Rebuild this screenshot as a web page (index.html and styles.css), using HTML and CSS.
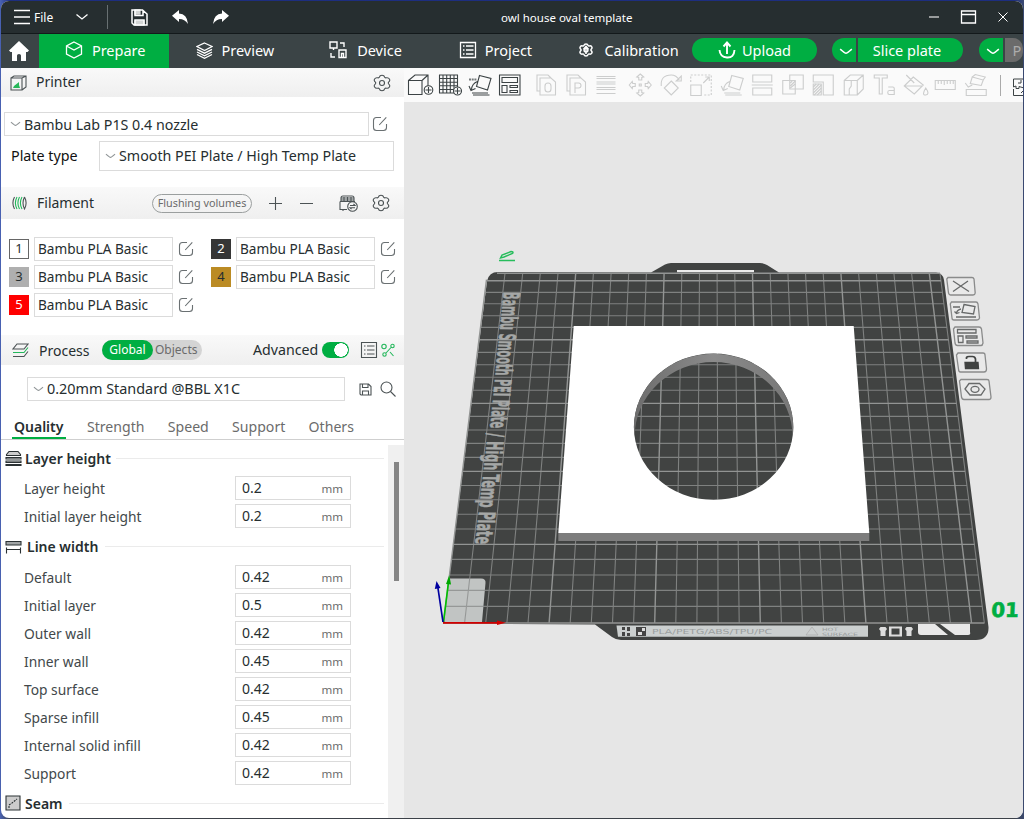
FILE: index.html
```html
<!DOCTYPE html>
<html lang="en">
<head>
<meta charset="utf-8">
<title>owl house oval template</title>
<link rel="stylesheet" href="styles.css">
</head>
<body>
<svg class="defs" width="0" height="0">
  <symbol id="edit" viewBox="0 0 16 16"><path d="M9 1.500H4.500Q1.500 1.500 1.500 4.500V11.500Q1.500 14.500 4.500 14.500H11.500Q14.500 14.500 14.500 11.500V8M7.200 9L14.300 1.300"/></symbol>
  <symbol id="chev" viewBox="0 0 12 6"><path d="M1 1Q5 4.500 6 4.500T11 1"/></symbol>
  <symbol id="gear" viewBox="0 0 18 18"><path d="M6.200 3.400Q6.800 1.300 9 1.300T11.800 3.400Q12.300 4 13.300 3.800Q15.400 3.300 16.400 5T15.600 8.200Q15 9 15.600 9.800Q17.400 11.300 16.400 13T13.300 14.200Q12.300 14 11.800 14.600Q11.200 16.700 9 16.700T6.200 14.600Q5.700 14 4.700 14.200Q2.600 14.700 1.600 13T2.400 9.800Q3 9 2.400 8.200Q.6 6.700 1.600 5T4.700 3.800Q5.700 4 6.200 3.400Z"/><circle cx="9" cy="9" r="2.500"/></symbol>
  <symbol id="arrange" viewBox="0 0 30 34"><path d="M14.500 7.500L26 10.500L22.500 22L11.500 18.500ZM12.500 13.500Q7 15.500 6.500 21.500M4 18L6 22.500L10.500 20.500M7 25H23M8 27H24.500"/></symbol>
  <symbol id="list" viewBox="0 0 18 18"><path d="M1.500 1.500H16.500V16.500H1.500ZM4 5H5.500M7 5H14.500M4 9H5.500M7 9H14.500M4 13H5.500M7 13H14.500"/></symbol>
</svg>
<div class="window">
  <header class="titlebar">
    <svg class="ico menu" width="16" height="16" viewBox="0 0 16 16"><path d="M0 1.500H16M0 8H16M0 14.500H16"/></svg>
    <span class="file">File</span>
    <svg class="ico drop" width="14" height="8" viewBox="0 0 14 8"><path d="M1.500 1.500L7 6L12.500 1.500"/></svg>
    <i class="bar"></i>
    <svg class="ico save" width="17" height="17" viewBox="0 0 17 17"><path d="M1 1H11.500L16 5V16H3L1 14ZM4 1V6.500H12V1M4 16V11H13V16" stroke-width="1.500"/><path class="solid" d="M4 1H9V5H4ZM4 12H13V16H4Z" opacity=".8"/></svg>
    <svg class="solid undo" width="16" height="14" viewBox="0 0 16 14"><path d="M0 5.800L7 0V3.500Q15 3.500 16 14Q12.500 8.800 7 9V12Z"/></svg>
    <svg class="solid redo" width="16" height="14" viewBox="0 0 16 14"><path d="M16 5.800L9 0V3.500Q1 3.500 0 14Q3.500 8.800 9 9V12Z"/></svg>
    <span class="doc">owl house oval template</span>
    <svg class="ico winbtns" width="80" height="14" viewBox="0 0 80 14"><path d="M1 7H11" opacity=".7"/><path d="M33.500 1H47.500V13H33.500ZM33.500 4.500H47.500"/><path d="M70.500 2.500L79.500 11.500M79.500 2.500L70.500 11.500" stroke-width="1"/></svg>
  </header>
  <nav class="nav">
    <a class="home"><svg class="solid" width="20" height="20" viewBox="0 0 20 20"><path d="M10 0L20 9.500L18.500 11H17V20H12V14.500Q12 13 10 13T8 14.500V20H3V11H1.500L0 9.500Z"/></svg></a>
    <a class="tab on"><svg class="ico" width="18" height="18" viewBox="0 0 18 18"><path d="M9 1L16.500 5V13L9 17L1.500 13V5ZM1.500 5L9 9L16.500 5"/></svg><span>Prepare</span></a>
    <a class="tab preview"><svg class="ico" width="17" height="17" viewBox="0 0 17 17"><path d="M8.500 1L16 4.500L8.500 8.500L1 4.500ZM1 7.300L8.500 11.200L16 7.300M1 10L8.500 13.800L16 10M1 12.500L8.500 16.300L16 12.500"/></svg><span>Preview</span></a>
    <a class="tab device"><svg class="ico" width="18" height="18" viewBox="0 0 18 18"><path d="M1 1H8V7H1ZM4.500 7V9M11 2H15V6M2 12V16H6M10 9H17V16.500H10ZM12.500 16V12.500H14.500V16" stroke-width="1.400"/></svg><span>Device</span></a>
    <a class="tab project"><svg class="ico" width="18" height="18"><use href="#list"/></svg><span>Project</span></a>
    <a class="tab calib"><svg class="ico" width="14" height="14" viewBox="0 0 18 18"><g stroke-width="1.900"><use href="#gear"/></g><path d="M9 4V14M6 8L9 4.500L12 8" stroke-width="2"/></svg><span>Calibration</span></a>
    <button class="pill upload"><svg class="ico" width="18" height="18" viewBox="0 0 18 18"><path d="M9 13V2M5.500 5.500L9 1.500L12.500 5.500M1.500 9Q2 16 9 16.500T16.500 9" stroke-width="1.900"/></svg><span>Upload</span></button>
    <button class="pill half left"><svg class="ico" width="14" height="7"><use href="#chev"/></svg></button>
    <button class="pill half slice"><span>Slice plate</span></button>
    <button class="pill half left print"><svg class="ico" width="14" height="7"><use href="#chev"/></svg></button>
    <button class="pill half disabled"><span>P</span></button>
  </nav>
  <div class="main">
    <aside class="side">
      <div class="head printer">
        <svg class="line" width="17" height="16" viewBox="0 0 17 16"><path d="M1 3H12V15H1ZM1 3L4 1H16V12L12 15M12 3L16 1"/><path class="g" d="M3 13L4 11L9 7V10L10 13Z"/></svg>
        <span class="name">Printer</span><svg class="line end" width="18" height="18"><use href="#gear"/></svg>
      </div>
      <div class="row machine"><div class="select"><svg class="chev" width="11" height="6"><use href="#chev"/></svg><span>Bambu Lab P1S 0.4 nozzle</span></div><svg class="line edit" width="16" height="16"><use href="#edit"/></svg></div>
      <div class="row plate"><label>Plate type</label><div class="select"><svg class="chev" width="11" height="6"><use href="#chev"/></svg><span>Smooth PEI Plate / High Temp Plate</span></div></div>
      <div class="head filament">
        <svg class="line" width="15" height="14" viewBox="0 0 15 14"><path d="M2.500 1Q-.7 7 2.500 13M12.500 1Q15.700 7 12.500 13Q9.500 7 12.500 1"/><path class="gl" d="M5 1Q1.800 7 5 13M7.500 1Q4.300 7 7.500 13M10 1Q6.800 7 10 13"/></svg>
        <span class="name">Filament</span><span class="flush">Flushing volumes</span>
        <svg class="line plus" width="13" height="13" viewBox="0 0 13 13"><path d="M0 6.500H13M6.500 0V13"/></svg>
        <svg class="line minus" width="13" height="13" viewBox="0 0 13 13"><path d="M0 6.500H13"/></svg>
        <svg class="line ams" width="19" height="17" viewBox="0 0 19 17"><path d="M2 6V3Q2 1 4 1H13Q15 1 15 3V6M1 6.500H16M1 6.500V14.500H8M5 2V6M8.500 2V6M12 2V6M4 14V16"/><path class="dark" d="M2 2H15V6H2Z" opacity=".5"/><circle cx="13.500" cy="11.500" r="4.800"/><path d="M11 10.500H16L14.500 9M16 12.800H11L12.500 14.200"/></svg>
        <svg class="line" width="18" height="18"><use href="#gear"/></svg>
      </div>
      <div class="spools">
        <div class="spool"><b class="c1">1</b><span>Bambu PLA Basic</span><svg class="line edit" width="16" height="16"><use href="#edit"/></svg></div>
        <div class="spool"><b class="c2">2</b><span>Bambu PLA Basic</span><svg class="line edit" width="16" height="16"><use href="#edit"/></svg></div>
        <div class="spool"><b class="c3">3</b><span>Bambu PLA Basic</span><svg class="line edit" width="16" height="16"><use href="#edit"/></svg></div>
        <div class="spool"><b class="c4">4</b><span>Bambu PLA Basic</span><svg class="line edit" width="16" height="16"><use href="#edit"/></svg></div>
        <div class="spool"><b class="c5">5</b><span>Bambu PLA Basic</span><svg class="line edit" width="16" height="16"><use href="#edit"/></svg></div>
      </div>
      <div class="head process">
        <svg class="line" width="17" height="15" viewBox="0 0 17 15"><path d="M5 1H16L12 6H1Z"/><path class="gl" d="M1 9.500H12L16 4.500"/><path d="M1 13.500H12L16 8.500"/></svg>
        <span class="name">Process</span>
        <div class="scope"><span class="on">Global</span><span>Objects</span></div>
        <span class="adv">Advanced</span><i class="toggle"></i>
        <svg class="line lst" width="18" height="18"><use href="#list"/></svg>
        <svg class="gl tune" width="14" height="14" viewBox="0 0 14 14"><circle cx="3" cy="3.500" r="2.200"/><circle cx="11.500" cy="3" r="1.700"/><circle cx="3.500" cy="11.500" r="1.700"/><path d="M5 10L10 4.500M9 9L12.500 13"/></svg>
      </div>
      <div class="row preset"><div class="select"><svg class="chev" width="11" height="6"><use href="#chev"/></svg><span>0.20mm Standard @BBL X1C</span></div>
        <svg class="line" width="13" height="13" viewBox="0 0 13 13"><path d="M1 1H9.500L12 3.500V12H2L1 11ZM3.500 1V4.500H9V1M3.500 12V8H9.500V12"/></svg>
        <svg class="line" width="16" height="16" viewBox="0 0 16 16"><circle cx="6.500" cy="6.500" r="5.500"/><path d="M10.500 10.500L15.500 15.500"/></svg></div>
      <div class="tabs"><span class="on">Quality</span><span>Strength</span><span>Speed</span><span>Support</span><span>Others</span></div>
      <div class="scroll">
        <div class="form">
          <h3><svg class="line" width="17" height="16" viewBox="0 0 17 16"><path class="pale" d="M1.500 4.500L4 1.500H13L15.500 4.500V5.500H1.500ZM1 7.500H16V9H1ZM1 11H16V12.500H1ZM1 14.500H16V15.500H1Z"/></svg><span>Layer height</span></h3>
          <div class="field"><label>Layer height</label><div class="box"><span>0.2</span><em>mm</em></div></div>
          <div class="field"><label>Initial layer height</label><div class="box"><span>0.2</span><em>mm</em></div></div>
          <h3 class="lw"><svg class="line" width="17" height="14" viewBox="0 0 17 14"><path class="shade" d="M1 1.500H16V5H1Z"/><path d="M1 9.500H16M1.500 7.500V13.500M15.500 7.500V13.500"/></svg><span>Line width</span></h3>
          <div class="field"><label>Default</label><div class="box"><span>0.42</span><em>mm</em></div></div>
          <div class="field"><label>Initial layer</label><div class="box"><span>0.5</span><em>mm</em></div></div>
          <div class="field"><label>Outer wall</label><div class="box"><span>0.42</span><em>mm</em></div></div>
          <div class="field"><label>Inner wall</label><div class="box"><span>0.45</span><em>mm</em></div></div>
          <div class="field"><label>Top surface</label><div class="box"><span>0.42</span><em>mm</em></div></div>
          <div class="field"><label>Sparse infill</label><div class="box"><span>0.45</span><em>mm</em></div></div>
          <div class="field"><label>Internal solid infill</label><div class="box"><span>0.42</span><em>mm</em></div></div>
          <div class="field"><label>Support</label><div class="box"><span>0.42</span><em>mm</em></div></div>
          <h3 class="seam"><svg class="line" width="16" height="16" viewBox="0 0 16 16"><path class="pale" d="M1 1H15V15H1Z"/><path d="M4 13V10L7 8L12 4" stroke-dasharray="2 1"/></svg><span>Seam</span></h3>
        </div>
        <div class="track"><i></i></div>
      </div>
    </aside>
    <section class="view">
      <div class="tools">
        <div class="grp dk">
          <svg viewBox="0 0 30 34"><path d="M3.500 12.500H17V26.500H3.500ZM3.500 12.500L10 7H23V18M17 12.500L23 7"/><circle class="bg" cx="23.500" cy="22" r="4.300"/><path d="M20.500 22H26.500M23.500 19V25"/></svg>
          <svg viewBox="0 0 30 34"><path d="M4.500 7H22.500V25H4.500ZM8 7V25M11.700 7V25M15.300 7V25M19 7V25M4.500 10.500H22.500M4.500 14.200H22.500M4.500 17.800H22.500M4.500 21.500H22.500"/><circle class="bg" cx="22.500" cy="23" r="4"/><path d="M19.500 23H25.500M22.500 20V26"/></svg>
          <svg viewBox="0 0 30 34"><use href="#arrange"/><path d="M4 11.500H12" stroke-dasharray="2 .7" stroke-width="2" opacity=".7"/></svg>
          <svg viewBox="0 0 30 34"><path d="M4.500 7H25V27H4.500ZM7 9.500H22.500V14.500H7ZM7 17.500H12V24.500H7ZM15 17.500H22.500V19.500H15ZM15 22.500H22.500V24.500H15Z"/></svg>
        </div>
        <div class="grp lt two">
          <svg viewBox="0 0 30 34"><path d="M9 23H6V7H17L20 10M9 10H20L24.500 14V27H9ZM17 15Q20 15 20 18V21Q20 24 17 24T14 21V18Q14 15 17 15Z"/></svg>
          <svg viewBox="0 0 30 34"><path d="M9 23H6V7H17L20 10M9 10H20L24.500 14V27H9ZM14 25V15H17.500Q20 15 20 17.500T17.500 20H14"/></svg>
          <svg viewBox="0 0 30 34"><path d="M5.500 8.500H24.500M5.500 10.500H24.500M5.500 14H24.500M5.500 16H24.500M5.500 19.500H24.500M5.500 21.500H24.500M5.500 25.500H24.500"/></svg>
        </div>
        <div class="grp lt three">
          <svg viewBox="0 0 30 34"><path d="M15 6L18.500 9L16.500 9.500V12H13.500V9.500L11.500 9ZM15 28L18.500 25L16.500 24.500V22H13.500V24.500L11.500 25ZM4 17L7 13.500L7.500 15.500H10V18.500H7.500L7 20.500ZM26 17L23 13.500L22.500 15.500H20V18.500H22.500L23 20.500ZM14 16H16V18H14Z"/></svg>
          <svg viewBox="0 0 30 34"><path d="M15 13L22 20L15 27L8 20ZM5 18Q4 7 15 7Q20 7 23 12M25 8V13H20Z"/></svg>
          <svg viewBox="0 0 30 34"><path d="M4.500 17H15V27.500H4.500ZM17 15L23 9M19 9H23V13"/><path d="M4.500 14V7H25V27H17" stroke-dasharray="2 1.500"/></svg>
          <svg viewBox="0 0 30 34"><use href="#arrange"/></svg>
          <svg viewBox="0 0 30 34"><path d="M5.500 14V7H24.500V14ZM5.500 20V27H24.500V20ZM4.500 17H25.500"/></svg>
          <svg viewBox="0 0 30 34"><path d="M4.500 12.500H17V26H4.500ZM11.500 7H25V21H11.500Z"/><path d="M12 15L14 13M12 18L17 13M12 20L17 16"/></svg>
          <svg viewBox="0 0 30 34"><path d="M5 14V7H25V27H15V14ZM5 16H13V27H5Z"/><path d="M5 19L8 16M5 22L11 16M5 25L13 17M6 27L13 20M9 27L13 23"/></svg>
          <svg viewBox="0 0 30 34"><path d="M5 12.500H18V27H5ZM5 12.500L11 7H24V21L18 27M18 12.500L24 7M12 13V18L10 21V27"/></svg>
          <svg viewBox="0 0 30 34"><path d="M5 7H18V10H13V26H10V10H5ZM19 19H23.500Q25 19 25 20.500V26.500H20Q18.500 26.500 18.500 24.500T20 22.500H25"/></svg>
          <svg viewBox="0 0 30 34"><path d="M13 9L23 17L14 26L4 18ZM4 18H22M6 7L14 15M25.500 20Q30 26.500 25.500 27T25.500 20Z"/></svg>
          <svg viewBox="0 0 30 34"><path d="M5 12.500H25V21.500H5ZM8 13V16M11 13V16M14 13V17M17 13V16M20 13V16M23 13V16"/></svg>
          <svg viewBox="0 0 30 34"><path d="M5 21.500H25V27.500H5ZM11 9L22 12L20 17.500L9 15.500ZM11 9L14 6.500L24 9L22 12M4 15L7 19L11 17"/></svg>
        </div>
        <i class="sep"></i>
        <svg class="cut" viewBox="0 0 11 34"><path d="M12 11H1.500V19L4 18V20.500H7V18.500L12 20M1.500 21V27.500H12M6 15H9V12M9 25L12 22"/></svg>
      </div>
      <svg class="scene" width="618" height="717" viewBox="404 102 618 717">
        <path fill="#414342" d="M651 272.500L665 264.500Q668 263 671 263H760Q764 263 767 265L779 272.500H936Q943 273 944 280L988.500 627Q989 639.500 976 640H621Q616 640 612 637L595 624.500L443.300 623.500L487 281Q489 272 498 272Z"/>
        <path fill="#ececec" d="M677 270H754V272.300H677Z"/>
        <path fill="#c1c4c3" d="M449 578.500H481Q486 578.500 485.500 583L482 622H445.500Q443.500 622 443.700 620Z"/>
        <g fill="none" stroke="#8d8f8e" stroke-width="1.100" opacity=".82">
          <path d="M505 273.300L464.600 622.700M522.700 273.300L485.700 622.700M540.300 273.300L506.900 622.700M558 273.300L528 622.700M593.400 273.300L570.200 622.700M611.100 273.300L591.300 622.700M628.700 273.300L612.500 622.700M646.400 273.300L633.600 622.700M681.800 273.300L675.800 622.700M699.500 273.300L696.900 622.700M717.100 273.300L718.100 622.700M734.800 273.300L739.200 622.700M770.200 273.300L781.400 622.700M787.900 273.300L802.500 622.700M805.500 273.300L823.700 622.700M823.200 273.300L844.800 622.700M858.600 273.300L887 622.700M876.300 273.300L908.100 622.700M893.900 273.300L929.300 622.700M911.600 273.300L950.400 622.700M940 273.300L984.300 622.700"/>
          <path d="M485 292.400H943M483.500 303.800H944M482 315.700H945M480.500 327.400H947M477.500 352.400H950M476 364.800H951.500M474.500 377.200H953M472.800 390.300H955M469.500 416.400H958M467.800 430H960M466 443.400H961.500M464.300 457.400H963.500M460.800 485.500H967M459 499.700H968.500M457.200 514.300H970.500M455.400 529H972.500M451.500 559.400H976.500M449.500 575H978.500M447.500 590.400H980.500M445.500 606.400H982.500"/>
        </g>
        <path fill="none" stroke="#929493" stroke-width="1.400" d="M486.500 279.700L443.500 622.700M575.700 273.300L549.100 622.700M664.100 273.300L654.700 622.700M752.500 273.300L760.300 622.700M840.900 273.300L865.900 622.700M929.300 273.300L971.500 622.700M497 273.300H940M486.500 280.700H941M479 339.800H948.500M471.200 403.400H956.500M462.600 471.400H965.200M453.400 544.400H974.500M443.500 623H984.500"/>
        <g class="platetext">
          <text transform="matrix(-.098 1 -1 -.01 503.500 292)" textLength="136" lengthAdjust="spacingAndGlyphs">Bambu Smooth PEI Plate</text>
          <text transform="matrix(-.11 1 -1 -.01 488 433)" textLength="4" lengthAdjust="spacingAndGlyphs">/</text>
          <text transform="matrix(-.115 1 -1 -.01 487 441)" textLength="103" lengthAdjust="spacingAndGlyphs">High Temp Plate</text>
        </g>
        <path fill="#fff" fill-rule="evenodd" d="M573.700 326H853.700L869.300 533H558.300ZM633.900 427A79.700 73 0 0 0 793.300 427A79.700 73.500 0 0 0 633.900 427Z"/>
        <path fill="#7d7d7d" d="M558.300 533H869.300V541H558.300Z"/>
        <path fill="url(#rim)" d="M634.600 437A79.700 73.500 0 1 1 792.600 437A79 75 0 0 0 634.600 437Z"/>
        <linearGradient id="rim"><stop stop-color="#6d6d6d"/><stop offset=".5" stop-color="#8b8b8b"/><stop offset="1" stop-color="#777"/></linearGradient>
        <g fill="#cbcfcf"><path d="M616.500 625.500H868V636.800H618Z"/><path fill="#e8e8e8" d="M918 624H935L948 635H921Q918 635 918 632ZM940 624H970V632Q971 635 968 635H955Z"/></g>
        <g fill="#444"><path d="M622 627H625V630H622ZM627 627H630V631H627ZM622 632H625V636H622ZM627 633H630V636H627ZM636 627H646V636H636Z"/></g>
        <path fill="#ddd" d="M638 632H642V635H638ZM642 628H645V631H642ZM879 629L880.500 627H885.500L887 629L885.500 631V636H880.500V631ZM905 629L906.500 627H911.500L913 629L911.500 631V636H906.500V631ZM889 626.500H902V636.500H889Z"/>
        <path fill="#414342" d="M891.500 628.500H899.500V634.500H891.500Z"/>
        <g class="strip"><text x="652" y="634.200" textLength="120" lengthAdjust="spacingAndGlyphs">PLA/PETG/ABS/TPU/PC</text><text class="hot" x="822" y="631" textLength="16" lengthAdjust="spacingAndGlyphs">HOT</text><text class="hot" x="822" y="636" textLength="36" lengthAdjust="spacingAndGlyphs">SURFACE</text><path d="M806 635L812 627L818 635Z"/></g>
        <g fill="none" stroke-width="1.700"><path stroke="#d00000" d="M443 622.800H500"/><path stroke="#00c000" d="M443.500 622L448.500 582"/><path stroke="#0000a0" d="M443 622L437.800 587"/></g>
        <path fill="#d00000" d="M497 620.500L506 622.800L497 625Z"/><path fill="#00a800" d="M446 584L449.300 575L451 584.500Z"/><path fill="#0000a0" d="M434.800 589L436.500 581L440.500 588Z"/>
        <path fill="none" stroke="#27bd5c" stroke-width="1.400" d="M499 260.500H515M500.500 258L502 255L511 251.500Q514 251.500 512.500 253.500L504 257Z"/>
        <text class="num" transform="matrix(1 0 -.05 1 991 616.500)" textLength="27.500" lengthAdjust="spacingAndGlyphs">01</text>
        <g class="actions">
          <path d="M948 277.500H972Q973.500 277.500 974 279L975.200 293Q975 295 973 295H950.500Q949 295 948.500 293L946.800 279ZM951.500 302H976Q977.500 302 978 304L979.500 318Q979 320 977 320H954Q952 320 952 318L950.300 304ZM955 327H979Q981 327 981.500 329L983 343Q982.500 345.500 981 345.500H957.500Q955.500 345.500 955 343L953.500 329ZM958 353H983Q985 353 985 355L986.500 369Q986.500 372 984 372H960.500Q958.500 372 958.500 369L956.500 355ZM961 379.500H987Q989 379.500 989 381L991 397Q991 399.500 989 399.500H964Q962 399.500 961.500 397L959.500 381Z"/>
          <path class="fg" d="M953 281L969 291.500M968 281L953 291.500M964 304.500L975 306.500L973.500 314L962 312.500ZM961 309Q957 310 956.500 313M954.500 311.500L956.500 313.500L959.500 312.500M956 317H976M953 307H960M957.500 329.500H976V333H957.500ZM958 336H963V342.500H958.500ZM966 336H977V338H966ZM967 341H978V343H967ZM965 389L969 383.500H979.500L985 389L981 395H970Z"/>
          <path class="lock" d="M965 362.500H978L978.500 368.500H965.500Z"/><path class="fg arch" d="M966.500 359V357.500Q967 356.500 969 356.500H972.500Q975 356.500 975.500 359V362"/><ellipse class="fg" cx="975" cy="389.300" rx="4" ry="3"/>
        </g>
      </svg>
    </section>
  </div>
</div>
</body>
</html>
```
FILE: styles.css
```css
* { box-sizing: border-box; }
body { margin: 0; width: 1024px; height: 819px; overflow: hidden; background: linear-gradient(90deg, #4a63b4, rgba(40, 60, 130, 0) 1%, rgba(0, 0, 0, 0) 99%, #3b4a70), linear-gradient(#1d2e80, #2a3a80 50%, #3c4148); font: 14px "Noto Sans", sans-serif; color: #262e30; }
.defs { position: absolute; }
svg { flex: none; display: block; }
.window { width: 1022px; height: 817px; margin: 1px 0 0 1px; border-radius: 8px; overflow: hidden; background: #fff; }
span, label { white-space: nowrap; }
.ico { fill: none; stroke: #fff; stroke-width: 1.3; }
.solid { fill: #fff; }
.line, .chev { fill: none; stroke: #4c5355; stroke-width: 1.1; }
.edit { stroke: #6a7072; }
.chev { stroke: #8f9496; }
.g { fill: #29b85a; stroke: none; }
.gl { fill: none; stroke: #24b75b; stroke-width: 1.1; }
.dark { fill: #4c5355; stroke: none; }
.shade { fill: #a0a4a5; }
.pale { fill: #ccc; }

.titlebar { height: 33px; background: #262e30; border-bottom: 1px solid #13191b; display: flex; align-items: center; padding-left: 13px; color: #fff; }
.file { margin-left: 4px; width: 20px; font-size: 12px; }
.drop { margin-left: 21px; }
.bar { width: 1px; height: 24px; background: #687072; margin-left: 18px; }
.save { margin-left: 23px; }
.undo { margin-left: 24px; }
.redo { margin-left: 25px; }
.doc { margin-left: 272px; width: 132px; font-size: 11.5px; }
.winbtns { margin-left: 295px; }

.nav { height: 34px; background: #3b4446; display: flex; align-items: center; color: #fff; }
.home { width: 38px; display: flex; padding-left: 8px; }
.tab { height: 34px; display: flex; align-items: center; font-size: 14.5px; padding: 0 0 2px 26px; gap: 9px; }
.tab.on { background: #00ae42; width: 130px; }
.preview { width: 135px; padding-left: 27px; gap: 9px; }
.device { width: 129px; gap: 10px; }
.project { width: 120px; gap: 8px; padding-left: 27px; }
.calib { width: 141px; gap: 11px; padding-left: 28px; }
.pill { border: 0; padding: 0 0 1px; margin: 0 0 2px; height: 24px; border-radius: 12px; background: #00ae42; color: #fff; font: 14.5px "Noto Sans", sans-serif; display: flex; align-items: center; justify-content: center; flex: none; }
.upload { width: 125px; gap: 6px; }
.half { border-radius: 0 12px 12px 0; }
.left { width: 24px; border-radius: 12px 0 0 12px; margin-left: 15px; padding: 2px 0 0 3px; }
.slice { width: 105px; margin-left: 2px; padding-right: 7px; }
.print { margin-left: 16px; }
.disabled { width: 18px; margin-left: 2px; background: #6b6b6b; color: #acacac; padding-left: 6px; border-radius: 0 10px 10px 0; }

.main { display: flex; height: 750px; }
.side { width: 403px; display: flex; flex-direction: column; flex: none; }
.head { background: linear-gradient(#f9f9f9, #efefef); display: flex; align-items: center; }
.head span { position: relative; top: -1px; }
.printer { height: 29px; padding: 0 13px 0 9px; }
.printer .name { margin-left: 9px; }
.end { margin-left: auto; }
.select { border: 1px solid #dbdbdb; display: flex; align-items: center; padding: 0 0 1px 5px; gap: 3px; font-size: 14.25px; }
.row { display: flex; align-items: center; }
.machine { margin-top: 15px; padding-left: 3px; gap: 3px; }
.machine .select { width: 365px; height: 24px; padding-bottom: 0; }
.plate { margin-top: 5px; padding-left: 10px; }
.plate label { width: 88px; color: #111; padding-bottom: 1px; font-size: 14.3px; }
.plate .select { width: 295px; height: 30px; }
.filament { height: 32px; margin-top: 16px; padding-left: 11px; }
.filament .name { margin-left: 10px; width: 115px; }
.head .flush { top: 0; width: 100px; height: 19px; border: 1px solid #9b9f9f; border-radius: 10px; font-size: 10.8px; line-height: 16px; text-align: center; color: #6b6b6b; }
.plus { margin-left: 17px; }
.minus { margin-left: 18px; }
.ams { margin: 0 14px 0 26px; }
.spools { padding: 18px 0 0 8px; display: grid; grid-template-columns: 202px 190px; row-gap: 4px; height: 116px; align-content: start; }
.spool { display: flex; align-items: center; height: 24px; }
.spool b { width: 20px; height: 20px; font-weight: 400; font-size: 13px; line-height: 19px; text-align: center; }
.spool span { width: 139px; height: 24px; margin: 0 5px 0 5px; padding-left: 3px; border: 1px solid #dbdbdb; font-size: 13.6px; line-height: 21px; }
.spool .c1 { border: 1px solid #666; line-height: 17px; }
.c2 { background: #363636; color: #fff; }
.c3 { background: #afafaf; }
.c4 { background: #bb8b24; }
.c5 { background: #f00; color: #fff; }
.process { height: 30px; padding-left: 11px; }
.process .name { margin-left: 10px; width: 63px; top: 0; }
.scope { width: 100px; height: 20px; border-radius: 10px; background: #d4d4d4; display: flex; font-size: 12px; line-height: 19px; color: #6b6b6b; }
.head .scope span { top: 0; }
.scope .on { width: 51px; border-radius: 10px; background: #00ae42; color: #fff; text-align: center; margin-right: 2px; }
.adv { margin-left: 51px; width: 69px; font-size: 14.2px; }
.toggle { width: 27px; height: 16px; border-radius: 8px; background: radial-gradient(circle at 19px 8px, #fff 6.5px, #00ae42 7px); }
.lst { margin-left: 11px; }
.tune { margin-left: 3px; }
.preset { margin-top: 12px; padding-left: 26px; }
.preset .select { width: 318px; height: 24px; margin-right: 14px; font-size: 14.4px; }
.preset .line + .line { margin-left: 8px; }
.tabs { height: 39px; border-bottom: 1px solid #cfcfcf; display: flex; color: #6b6b6b; padding-left: 11px; line-height: 52px; font-size: 14.1px; }
.tabs span { margin-right: 23.3px; height: 38px; }
.tabs .on { color: #262e30; font-size: 14px; font-weight: 600; border-bottom: 2px solid #00ae42; width: 54px; padding-left: 2px; margin-right: 21px; }
.scroll { display: flex; flex: 1; min-height: 0; }
.form { width: 387px; padding-top: 2px; }
.form h3 { margin: 0; height: 32px; font-size: 14px; font-weight: 600; display: flex; align-items: center; gap: 3px; padding: 0 4px 0 4px; }
.form h3 .line { stroke: #2b3234; }
.form h3.lw { gap: 5px; height: 33px; }
.form h3.seam { gap: 4px; }
.form h3::after { content: ""; flex: 1; height: 1px; background: #ebebeb; margin-left: 2px; }
.field { height: 28px; display: flex; align-items: center; padding-left: 23px; }
.field label { width: 211px; color: #42484a; font-size: 13.8px; }
.box { width: 116px; height: 24px; border: 1px solid #dbdbdb; display: flex; align-items: center; justify-content: space-between; padding: 0 7px 1px 6px; }
.box em { font-style: normal; font-size: 11.5px; color: #6b6b6b; padding-top: 1px; }
.track { width: 16px; margin-top: 5px; background: #f0f0f0; padding: 17px 0 0 6px; }
.track i { display: block; width: 5px; height: 119px; background: #858585; }

.view { width: 619px; background: #e6e6e6; }
.tools { height: 34px; background: #fafafa; display: flex; overflow: hidden; }
.grp { display: flex; fill: none; stroke: #3c4345; stroke-width: 1.1; }
.grp svg { width: 30px; height: 34px; }
.grp.lt { stroke: #cccdcd; }
.dk { margin-left: 1px; }
.two { margin-left: 6px; }
.three { margin-left: 4px; }
.three svg { width: 30.5px; }
.bg { fill: #fafafa; }
.sep { width: 1px; height: 21px; margin: 7px 0 0 9px; background: #aaa; flex: none; }
.cut { width: 11px; height: 34px; margin-left: 11px; fill: none; stroke: #3c4345; }
.platetext { font: bold 23px "DejaVu Sans Condensed", "DejaVu Sans", sans-serif; fill: #a5a7a6; stroke: #a5a7a6; stroke-width: .5; }
.strip { font: 7px "DejaVu Sans", sans-serif; fill: #9a9e9e; }
.strip .hot { font-size: 4.5px; }
.strip path { fill: none; stroke: #aaa; stroke-width: .7; }
.num { font: bold 20px "DejaVu Sans", sans-serif; fill: #00ae42; stroke: #00ae42; stroke-width: .6; }
.actions { fill: #e9e9e9; stroke: #8a8b8b; stroke-width: 1.3; }
.actions .fg { fill: none; stroke: #686a6a; }
.actions .arch { stroke: #414342; stroke-width: 1.7; }
.actions .lock { fill: #414342; stroke: #414342; }
```
